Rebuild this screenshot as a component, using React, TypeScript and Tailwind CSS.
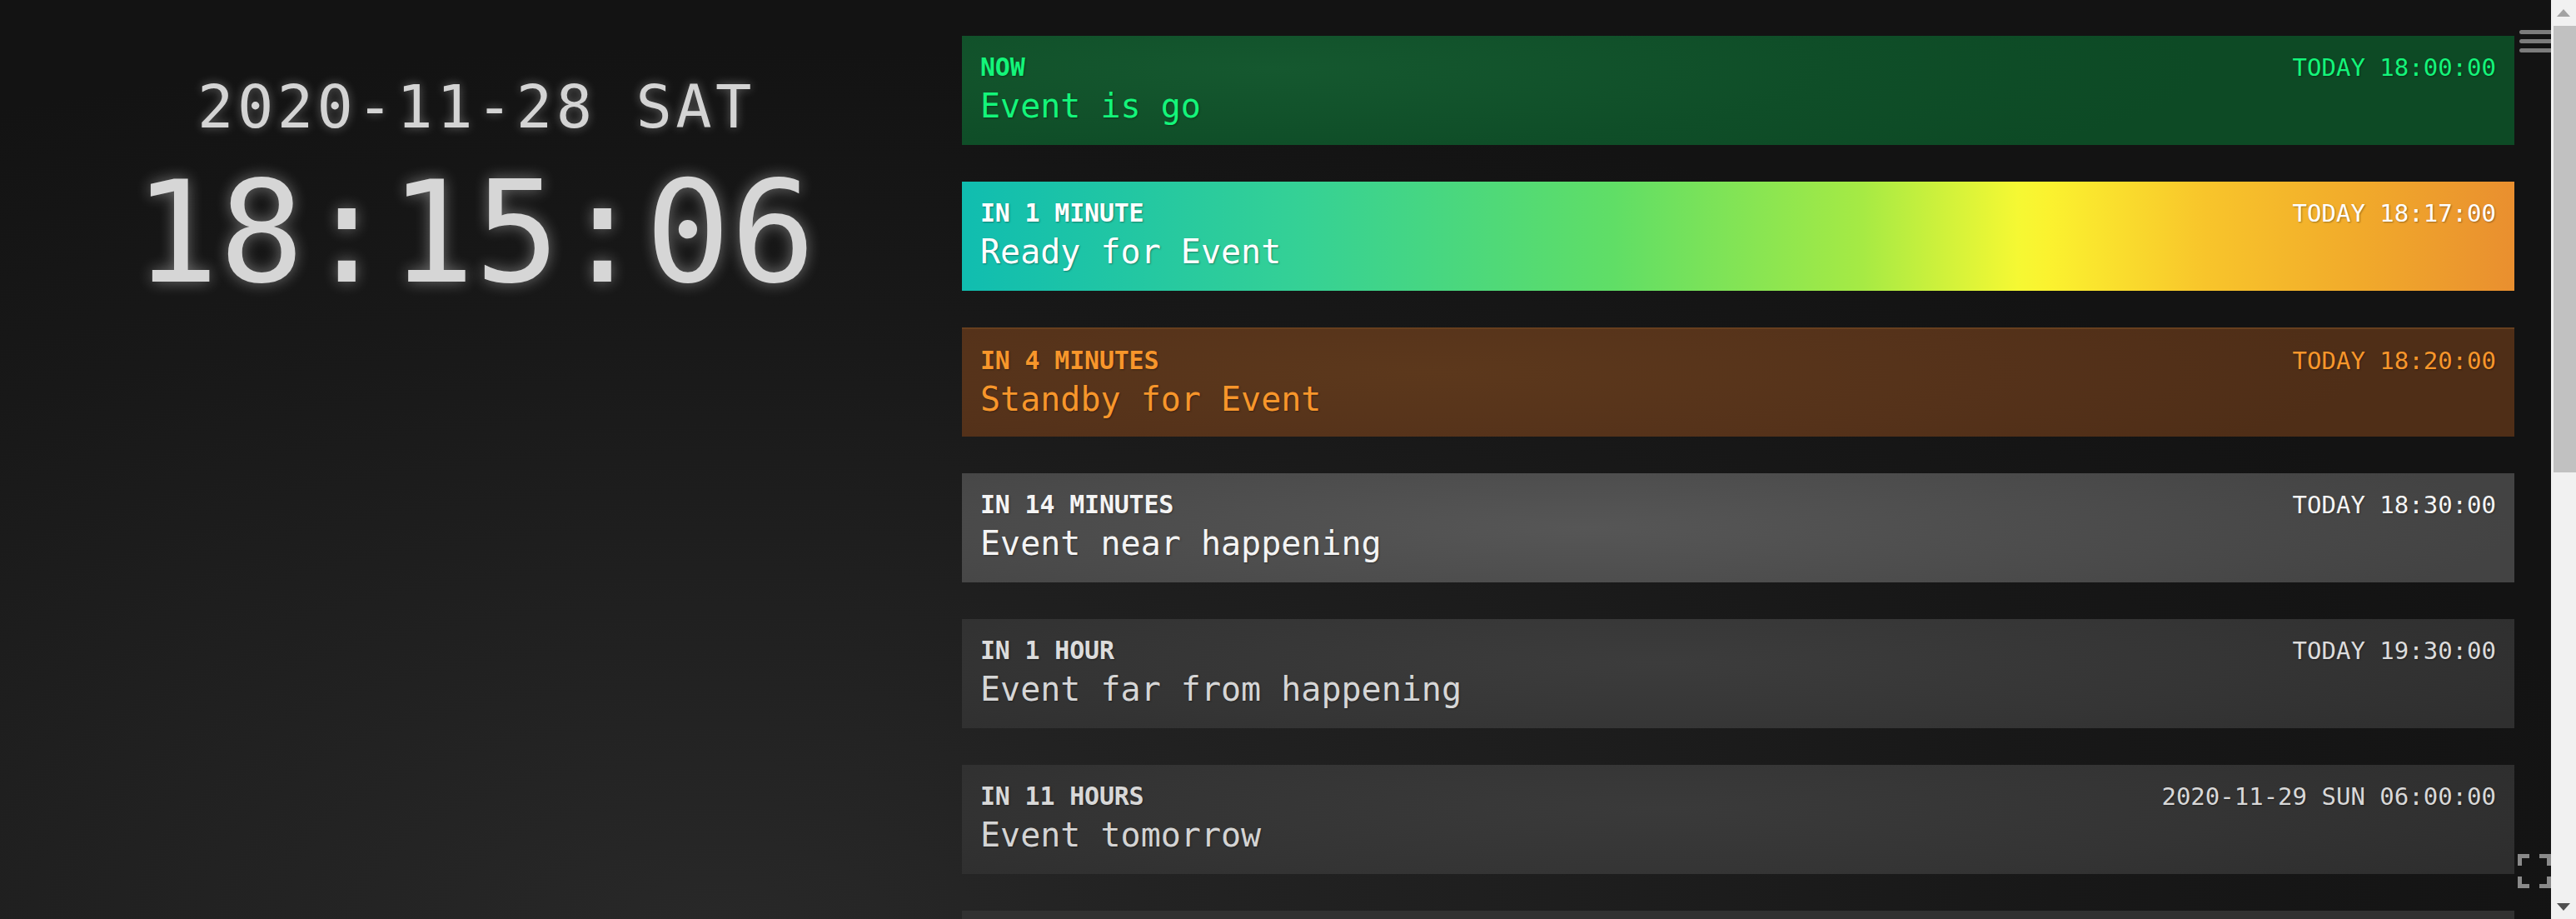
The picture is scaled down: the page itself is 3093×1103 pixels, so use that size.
import React from "react";

type Ev = {
  label: string;
  title: string;
  time: string;
  card: string;
  labelCls: string;
  titleCls: string;
  timeCls: string;
};

const events: Ev[] = [
  {
    label: "NOW",
    title: "Event is go",
    time: "TODAY 18:00:00",
    card: "bg-[radial-gradient(ellipse_60%_120%_at_20%_30%,#15582f_0%,#0f4e28_60%,#0d4a25_100%)]",
    labelCls: "text-[#14f57a]",
    titleCls: "text-[#14f57a]",
    timeCls: "text-[#14f57a]",
  },
  {
    label: "IN 1 MINUTE",
    title: "Ready for Event",
    time: "TODAY 18:17:00",
    card: "bg-[linear-gradient(90deg,#10bdb0_0%,#35d195_22%,#60de66_42%,#a6ea44_58%,#f5f833_68%,#fbf22f_70%,#f8c52b_80%,#f1aa2b_90%,#e98f2f_100%)]",
    labelCls: "text-white",
    titleCls: "text-white",
    timeCls: "text-white",
  },
  {
    label: "IN 4 MINUTES",
    title: "Standby for Event",
    time: "TODAY 18:20:00",
    card: "bg-[radial-gradient(ellipse_60%_120%_at_30%_40%,#5c381c_0%,#55321a_60%,#4f2e17_100%)] border-t-2 border-[#673f1e]",
    labelCls: "text-[#f7962b]",
    titleCls: "text-[#f7962b]",
    timeCls: "text-[#f7962b]",
  },
  {
    label: "IN 14 MINUTES",
    title: "Event near happening",
    time: "TODAY 18:30:00",
    card: "bg-[radial-gradient(ellipse_60%_110%_at_40%_50%,#565656_0%,#4b4b4b_60%,#434343_100%)]",
    labelCls: "text-[#f4f4f4]",
    titleCls: "text-[#f4f4f4]",
    timeCls: "text-[#f4f4f4]",
  },
  {
    label: "IN 1 HOUR",
    title: "Event far from happening",
    time: "TODAY 19:30:00",
    card: "bg-[radial-gradient(ellipse_60%_110%_at_45%_40%,#3c3c3c_0%,#353535_60%,#2f2f2f_100%)]",
    labelCls: "text-[#dcdcdc]",
    titleCls: "text-[#d6d6d6]",
    timeCls: "text-[#dcdcdc]",
  },
  {
    label: "IN 11 HOURS",
    title: "Event tomorrow",
    time: "2020-11-29 SUN 06:00:00",
    card: "bg-[radial-gradient(ellipse_60%_110%_at_45%_40%,#3a3a3a_0%,#343434_60%,#2e2e2e_100%)]",
    labelCls: "text-[#d8d8d8]",
    titleCls: "text-[#d4d4d4]",
    timeCls: "text-[#d8d8d8]",
  },
];

function Card({ ev }: { ev: Ev }) {
  return (
    <div
      className={`h-[131px] shrink-0 px-[22px] pt-[20px] flex flex-col [text-shadow:1px_1px_2px_rgba(0,0,0,0.35)] ${ev.card}`}
    >
      <div className="flex justify-between items-baseline">
        <span className={`font-bold text-[30px] leading-[36px] tracking-[-0.2px] ${ev.labelCls}`}>
          {ev.label}
        </span>
        <span className={`text-[29px] leading-[36px] ${ev.timeCls}`}>{ev.time}</span>
      </div>
      <div className={`text-[40px] leading-[48px] mt-[4px] whitespace-pre ${ev.titleCls}`}>
        {ev.title}
      </div>
    </div>
  );
}

export default function App() {
  return (
    <div className="flex w-[3093px] h-[1103px] overflow-hidden font-['DejaVu_Sans_Mono',monospace]">
      <main className="relative flex-1 h-full overflow-hidden flex bg-[radial-gradient(ellipse_75%_95%_at_28%_100%,#282828_0%,#1f1f1f_40%,#181818_70%,#131313_100%)]">
        <section className="w-[1140px] shrink-0 flex flex-col items-center pt-[92px]">
          <div className="text-[72px] leading-[72px] tracking-[4.5px] pl-[4px] text-[#d4d4d4] [text-shadow:0_0_12px_rgba(255,255,255,0.35)]">
            2020-11-28 SAT
          </div>
          <div className="mt-[30px] text-[170px] leading-[170px] text-[#d6d6d6] [text-shadow:0_0_18px_rgba(255,255,255,0.4)]">
            18:15:06
          </div>
        </section>
        <section className="ml-[15px] w-[1864px] shrink-0 pt-[43px] flex flex-col gap-[44px]">
          {events.map((ev) => (
            <Card key={ev.label} ev={ev} />
          ))}
          <div className="h-[131px] shrink-0 bg-[#313131]" />
        </section>
        <div className="absolute right-0 top-[36px] flex flex-col gap-[6px]">
          <div className="w-[38px] h-[5px] rounded-l-full bg-[#7c7c7c]" />
          <div className="w-[38px] h-[5px] rounded-l-full bg-[#7c7c7c]" />
          <div className="w-[38px] h-[5px] rounded-l-full bg-[#7c7c7c]" />
        </div>
        <svg
          className="absolute right-0 top-[1025px]"
          width="40"
          height="41"
          viewBox="0 0 40 41"
          fill="none"
          stroke="#8a8a8a"
          strokeWidth="5"
        >
          <path d="M2.5 14V2.5H14" />
          <path d="M26 2.5H37.5V14" />
          <path d="M2.5 27V38.5H14" />
          <path d="M26 38.5H37.5V27" />
        </svg>
      </main>
      <aside className="w-[30px] shrink-0 h-full bg-[#f1f1f1] flex flex-col">
        <div className="h-[30px] flex items-center justify-center">
          <div className="w-0 h-0 border-l-[8px] border-r-[8px] border-b-[9px] border-l-transparent border-r-transparent border-b-[#a3a3a3]" />
        </div>
        <div className="ml-[3px] mt-[1px] h-[536px] bg-[#c1c1c1]" />
        <div className="flex-1" />
        <div className="h-[30px] flex items-center justify-center">
          <div className="w-0 h-0 border-l-[8px] border-r-[8px] border-t-[9px] border-l-transparent border-r-transparent border-t-[#505050]" />
        </div>
      </aside>
    </div>
  );
}
